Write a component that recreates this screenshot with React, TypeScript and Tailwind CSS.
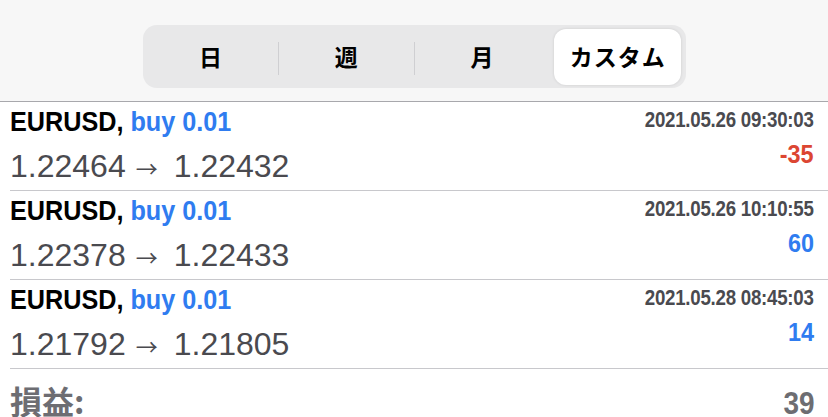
import React from "react";

type Deal = {
  time: string;
  open: string;
  close: string;
  profit: number;
};

const deals: Deal[] = [
  { time: "2021.05.26 09:30:03", open: "1.22464", close: "1.22432", profit: -35 },
  { time: "2021.05.26 10:10:55", open: "1.22378", close: "1.22433", profit: 60 },
  { time: "2021.05.28 08:45:03", open: "1.21792", close: "1.21805", profit: 14 },
];

const tabs = ["日", "週", "月", "カスタム"];

const font = { fontFamily: '"Liberation Sans", Arial, "Noto Sans CJK JP", sans-serif' };
const jp = { fontFamily: '"Noto Sans CJK JP", sans-serif' };

function Segmented() {
  return (
    <div className="flex h-[101px] items-start justify-center bg-[#f7f7f7] pt-[25px]">
      <div className="grid h-[63px] w-[543px] grid-cols-4 rounded-[14px] bg-[#e8e8e9]">
        {tabs.map((t, i) => {
          const active = i === tabs.length - 1;
          const divider = i > 0 && i < tabs.length - 1;
          return (
            <div key={t} className="relative flex items-center justify-center">
              {divider && (
                <span className="absolute left-0 top-[17px] h-[33px] w-px bg-[#cfcfd2]" />
              )}
              {active ? (
                <div className="flex h-[56px] w-[127px] items-center justify-center rounded-[12px] bg-white shadow-[0_0_3px_rgba(0,0,0,0.12)]">
                  <span className="text-[23px] font-bold tracking-[1px] text-black" style={jp}>
                    {t}
                  </span>
                </div>
              ) : (
                <span className="text-[23px] font-bold text-black" style={jp}>
                  {t}
                </span>
              )}
            </div>
          );
        })}
      </div>
    </div>
  );
}

function DealRow({ d }: { d: Deal }) {
  return (
    <div className="flex h-[89px] justify-between border-b border-[#c8c8cc] pr-[14px]">
      <div className="flex flex-col">
        <div className="origin-left scale-x-90 whitespace-nowrap text-[28px] font-bold leading-[40px] text-black">
          EURUSD, <span className="text-[#2f7cf0]">buy 0.01</span>
        </div>
        <div className="whitespace-nowrap text-[32px] leading-[48px] text-[#4a4a4f]">
          {d.open}
          <span className="ml-[10px] mr-[16px] text-[22px]" style={jp}>
            →
          </span>
          {d.close}
        </div>
      </div>
      <div className="flex flex-col items-end">
        <div className="origin-right scale-x-[0.85] whitespace-nowrap text-[22px] font-bold leading-[36px] tracking-[-0.3px] text-[#4a4a4f]">
          {d.time}
        </div>
        <div
          className={`origin-right scale-x-90 text-[26px] font-bold leading-[33px] ${
            d.profit < 0 ? "text-[#dc4632]" : "text-[#2f7cf0]"
          }`}
        >
          {d.profit}
        </div>
      </div>
    </div>
  );
}

export default function App() {
  const total = deals.reduce((s, d) => s + d.profit, 0);
  return (
    <div className="h-[417px] w-[828px] overflow-hidden bg-white" style={font}>
      <Segmented />
      <div className="border-t border-[#a8a8ac] pl-[10px]">
        {deals.map((d) => (
          <DealRow key={d.time} d={d} />
        ))}
        <div className="flex items-start justify-between pr-[14px] pt-[11px]">
          <span className="text-[32px] font-bold leading-[40px] text-[#6d6d72]" style={jp}>
            損益:
          </span>
          <span className="mt-[4px] origin-right scale-x-90 text-[31px] font-bold leading-[40px] text-[#6d6d72]">
            {total}
          </span>
        </div>
      </div>
    </div>
  );
}
